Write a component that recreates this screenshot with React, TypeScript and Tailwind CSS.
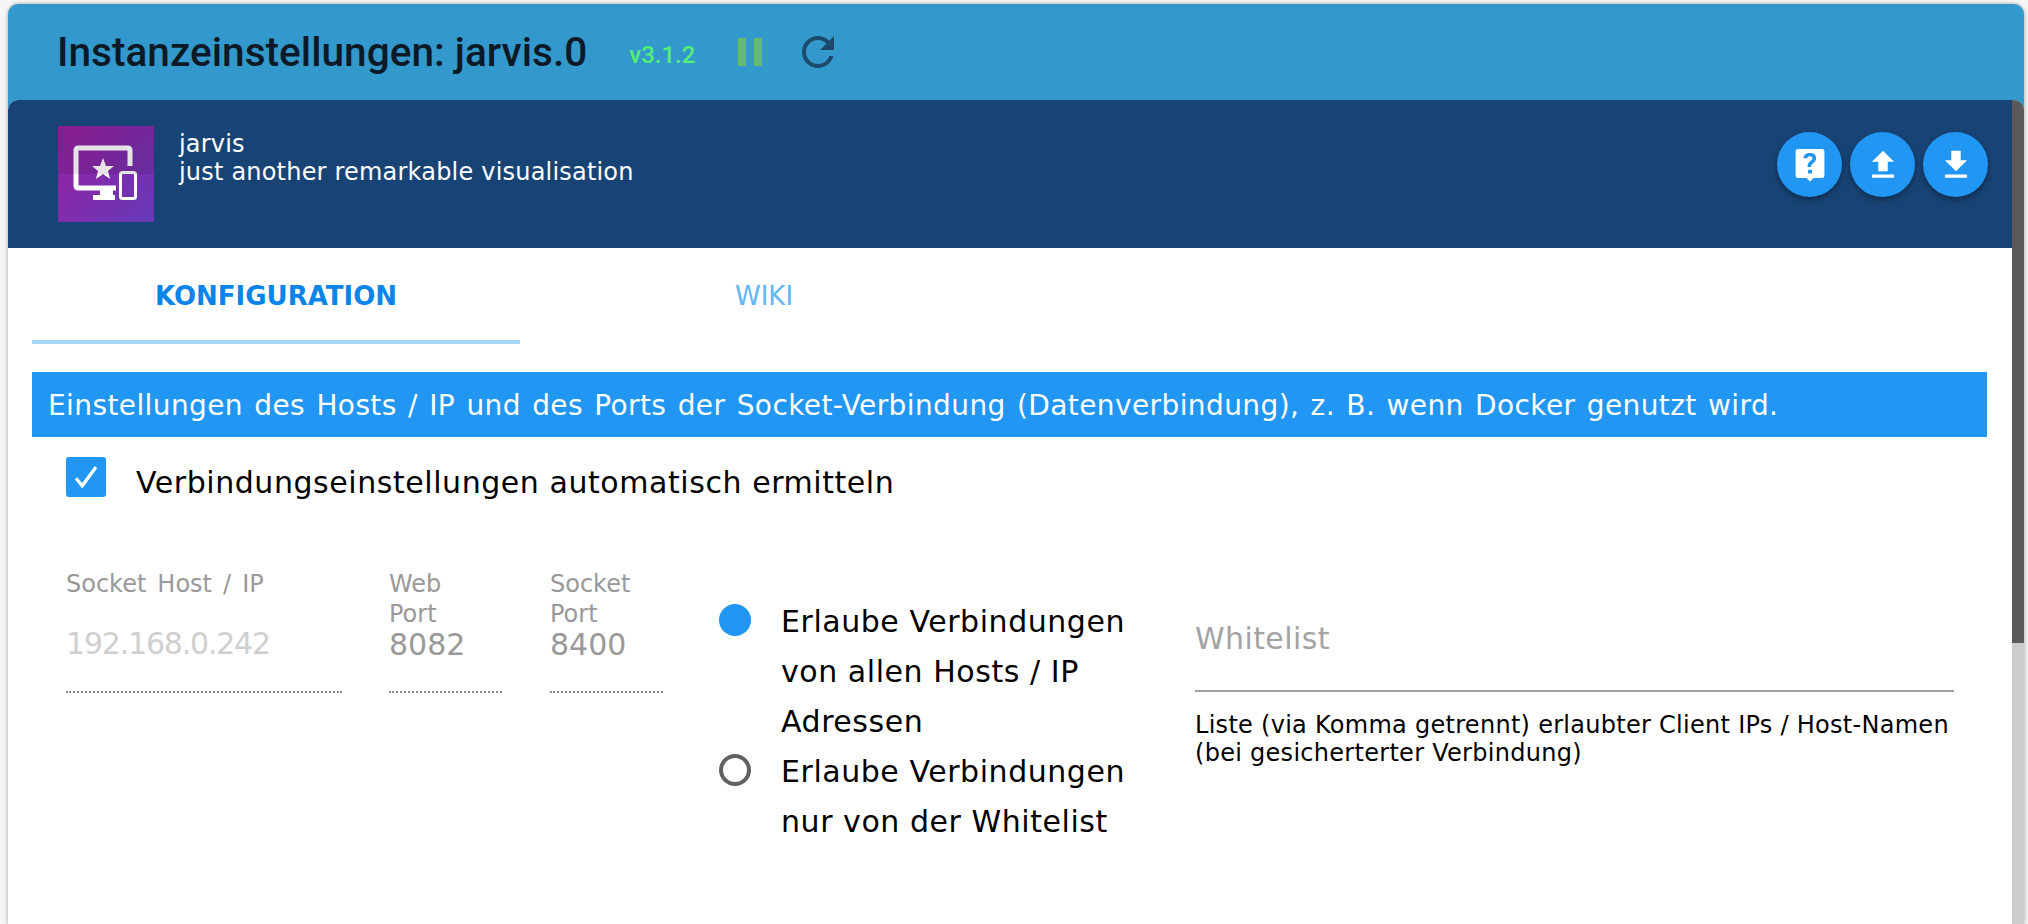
import React from 'react'

const bodyFont = "font-['DejaVu_Sans',sans-serif]"

const RoundButton = ({ children, size = 38 }: { children: React.ReactNode; size?: number }) => (
  <button className="flex h-[65px] w-[65px] items-center justify-center rounded-full bg-[#2196f3] shadow-[0_3px_6px_rgba(0,0,0,0.35)]">
    <svg width={size} height={size} viewBox="0 0 24 24" fill="#ffffff">
      {children}
    </svg>
  </button>
)

const Logo = () => (
  <svg width="96" height="96" viewBox="0 0 96 96" className="shrink-0">
    <defs>
      <linearGradient id="logoBg" x1="0" y1="0" x2="1" y2="1">
        <stop offset="0" stopColor="#9c1fa0" />
        <stop offset="1" stopColor="#643ab8" />
      </linearGradient>
    </defs>
    <rect width="96" height="96" fill="url(#logoBg)" />
    <path
      d="M72 40V24a2 2 0 0 0-2-2H20a2 2 0 0 0-2 2v36a2 2 0 0 0 2 2h38"
      fill="none"
      stroke="#ffffff"
      strokeWidth="5"
    />
    <rect x="42" y="63" width="13" height="8" fill="#ffffff" />
    <rect x="35" y="69" width="22" height="5" fill="#ffffff" />
    <polygon points="45,32 48,40 56,40 50,45 52,53 45,48 38,53 40,45 34,40 42,40" fill="#ffffff" />
    <rect x="62.5" y="46.5" width="15" height="26" rx="2" fill="none" stroke="#ffffff" strokeWidth="3" />
    <rect width="96" height="48" fill="#000000" fillOpacity="0.1" />
  </svg>
)

const Field = ({ label, value, light, width }: { label: React.ReactNode; value: string; light?: boolean; width: string }) => (
  <div className={`flex h-[128px] flex-col justify-between border-b-2 border-dotted border-[#8a8a8a] pt-[4px] ${width}`}>
    <label className="text-[24px] leading-[30px] text-[#999999] [word-spacing:3.4px]">{label}</label>
    <div className={`pb-[31px] text-[30px] leading-[32px] ${light ? 'text-[#cfcfcf] tracking-[-1.2px]' : 'text-[#999999]'}`}>{value}</div>
  </div>
)

export default function App() {
  return (
    <div className={`flex h-[924px] w-[2028px] overflow-hidden bg-[#f6f6f6] pl-2 pr-1 pt-1 ${bodyFont}`}>
      <div className="flex w-full flex-col overflow-hidden rounded-t-[10px] bg-[#3399cc] shadow-[0_0_4px_rgba(0,0,0,0.35)]">
        <header className="flex h-[96px] shrink-0 items-center pl-[49px]">
          <h1 className="font-['Roboto',sans-serif] text-[40.6px] font-medium leading-none text-[#0b1a26]">
            Instanzeinstellungen: jarvis.0
          </h1>
          <span className="ml-[42px] mt-[6px] font-['Roboto',sans-serif] text-[24px] font-medium text-[#55ee77]">v3.1.2</span>
          <div className="ml-[43px] flex gap-2">
            <div className="h-[28px] w-2 bg-[#66bb6a]" />
            <div className="h-[28px] w-2 bg-[#66bb6a]" />
          </div>
          <svg width="48" height="48" viewBox="0 0 24 24" fill="#1b4a6b" className="ml-[32px]">
            <path d="M17.65 6.35C16.2 4.9 14.21 4 12 4c-4.42 0-7.99 3.58-7.99 8s3.57 8 7.99 8c3.73 0 6.84-2.55 7.73-6h-2.08c-.82 2.33-3.04 4-5.65 4-3.31 0-6-2.69-6-6s2.69-6 6-6c1.66 0 3.14.69 4.22 1.78L13 11h7V4l-2.35 2.35z" />
          </svg>
        </header>

        <div className="flex min-h-0 flex-1 overflow-hidden rounded-t-[10px]">
          <div className="flex min-w-0 flex-1 flex-col bg-white">
            <div className="flex h-[148px] shrink-0 justify-between bg-[#184475] pl-[50px] pr-[24px] pt-[26px] text-white">
              <div className="flex">
                <Logo />
                <div className="ml-[25px] pt-[4px] text-[24px] leading-[28px] tracking-[0.2px]">
                  <div>jarvis</div>
                  <div>just another remarkable visualisation</div>
                </div>
              </div>
              <div className="flex gap-2 pt-[6px]">
                <RoundButton size={36}>
                  <path d="M4 1.3h16a1.6 1.6 0 0 1 1.6 1.6v16.2a1.6 1.6 0 0 1-1.6 1.6h-5.6L12 23l-2.4-2.3H4a1.6 1.6 0 0 1-1.6-1.6V2.900a1.6 1.6 0 0 1 1.6-1.6z" />
                  <path
                    fill="#2196f3"
                    d="M12 4c-2.5 0-4.200 1.200-4.300 3.500h2.500c.1-.9.7-1.400 1.700-1.400s1.700.5 1.700 1.400c0 .8-.5 1.200-1.300 1.800-1.200.9-1.900 1.700-1.900 3.500v.6h2.400v-.5c0-1 .4-1.500 1.300-2.100 1.100-.8 2-1.700 2-3.400C16.100 5.300 14.400 4 12 4zm-1.300 11.200v2.500h2.600v-2.500z"
                  />
                </RoundButton>
                <RoundButton>
                  <path d="M9 16h6v-6h4l-7-7-7 7h4zm-4 2h14v2H5z" />
                </RoundButton>
                <RoundButton>
                  <path d="M19 9h-4V3H9v6H5l7 7 7-7zM5 18v2h14v-2H5z" />
                </RoundButton>
              </div>
            </div>

            <div className="flex-1 pl-6 pr-[25px]">
              <div className="flex h-[96px]">
                <div className="flex w-[488px] items-center justify-center border-b-4 border-[#a6d5fa] pt-[5px] text-[26px] font-bold text-[#0a84e8]">
                  KONFIGURATION
                </div>
                <div className="flex w-[488px] items-center justify-center text-[26px] text-[#64b5f6]">WIKI</div>
              </div>

              <div className="mt-[28px] flex h-[65px] items-center bg-[#2196f3] pl-4 pt-[2px] text-[28px] tracking-[0.4px] text-white [word-spacing:2px]">
                Einstellungen des Hosts / IP und des Ports der Socket-Verbindung (Datenverbindung), z. B. wenn Docker genutzt wird.
              </div>

              <div className="mt-[20px] flex items-start pl-[34px]">
                <div className="flex h-[40px] w-[40px] items-center justify-center rounded-[3px] bg-[#2196f3]">
                  <svg width="30" height="30" viewBox="0 0 24 24" fill="none" stroke="#ffffff" strokeWidth="2.6">
                    <path d="M4 13l5 6L20 4" />
                  </svg>
                </div>
                <span className="ml-[30px] mt-[3px] text-[30px] leading-[46px] tracking-[0.56px] text-black">
                  Verbindungseinstellungen automatisch ermitteln
                </span>
              </div>

              <div className="mt-[59px] flex pl-[34px]">
                <Field width="w-[276px]" label="Socket Host / IP" value="192.168.0.242" light />
                <div className="ml-[47px]">
                  <Field
                    width="w-[113px]"
                    label={
                      <>
                        Web
                        <br />
                        Port
                      </>
                    }
                    value="8082"
                  />
                </div>
                <div className="ml-[48px]">
                  <Field
                    width="w-[113px]"
                    label={
                      <>
                        Socket
                        <br />
                        Port
                      </>
                    }
                    value="8400"
                  />
                </div>

                <div className="ml-[56px] w-[476px] pt-[32px] text-[30px] leading-[50px] tracking-[0.55px] text-black">
                  <div className="flex">
                    <div className="mt-[7px] h-[32px] w-[32px] shrink-0 rounded-full bg-[#2196f3]" />
                    <div className="ml-[30px]">
                      Erlaube Verbindungen
                      <br />
                      von allen Hosts / IP
                      <br />
                      Adressen
                    </div>
                  </div>
                  <div className="flex">
                    <div className="mt-[7px] h-[32px] w-[32px] shrink-0 rounded-full border-4 border-[#616161]" />
                    <div className="ml-[30px]">
                      Erlaube Verbindungen
                      <br />
                      nur von der Whitelist
                    </div>
                  </div>
                </div>

                <div className="w-[759px]">
                  <div className="flex h-[127px] items-end border-b-2 border-[#9e9e9e] pb-[29px] text-[30px] leading-[44px] tracking-[0.4px] text-[#a3a3a3]">
                    Whitelist
                  </div>
                  <p className="mt-[19px] text-[24px] leading-[28px] tracking-[0.28px] text-black">
                    Liste (via Komma getrennt) erlaubter Client IPs / Host-Namen
                    <br />
                    (bei gesicherterter Verbindung)
                  </p>
                </div>
              </div>
            </div>
          </div>

          <div className="flex w-3 shrink-0 flex-col bg-[#cccccc]">
            <div className="h-[543px] bg-[#5a5a5a]" />
          </div>
        </div>
      </div>
    </div>
  )
}
